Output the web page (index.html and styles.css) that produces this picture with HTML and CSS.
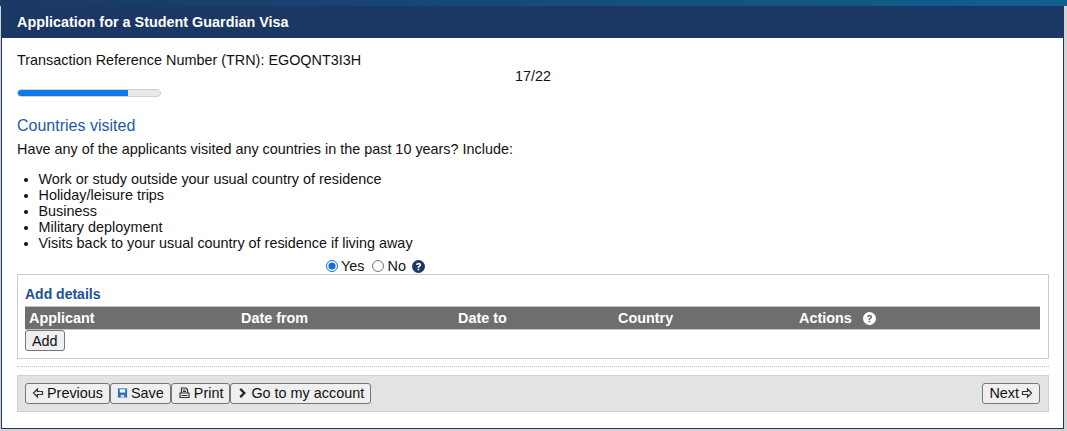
FILE: index.html
```html
<!DOCTYPE html>
<html lang="en">
<head>
    <meta charset="UTF-8">
    <title>Application for a Student Guardian Visa</title>
    <link rel="stylesheet" href="styles.css">
</head>
<body>
    <div class="top-strip"></div>
    <div class="page">
        <div class="page-title">Application for a Student Guardian Visa</div>
        <div class="content">
            <div class="trn">Transaction Reference Number (TRN): EGOQNT3I3H</div>
            <div class="step-count">17/22</div>
            <div class="progress"><div class="progress-bar"></div></div>

            <h2>Countries visited</h2>
            <p class="question">Have any of the applicants visited any countries in the past 10 years? Include:</p>
            <ul>
                <li>Work or study outside your usual country of residence</li>
                <li>Holiday/leisure trips</li>
                <li>Business</li>
                <li>Military deployment</li>
                <li>Visits back to your usual country of residence if living away</li>
            </ul>

            <div class="radio-row">
                <label><input type="radio" name="visited" checked>Yes</label>
                <label><input type="radio" name="visited">No</label>
                <svg class="help help-blue" viewBox="0 0 24 24"><circle cx="12" cy="12" r="12"/><path class="mark" d="M7.5 9.2c.3-2.6 2.2-4 4.7-4 2.600 0 4.500 1.500 4.500 3.800 0 1.800-1 2.700-2.200 3.500-1 .7-1.200 1-1.200 2.100h-3c0-2 .5-2.900 1.900-3.800 1-.7 1.400-1.100 1.400-1.700 0-.7-.6-1.200-1.400-1.200-.9 0-1.500.5-1.700 1.500zM10.300 16h3v3h-3z"/></svg>
            </div>

            <div class="details-box">
                <div class="details-title">Add details</div>
                <table>
                    <tr>
                        <th class="col-applicant">Applicant</th>
                        <th class="col-from">Date from</th>
                        <th class="col-to">Date to</th>
                        <th class="col-country">Country</th>
                        <th>Actions <svg class="help help-white" viewBox="0 0 24 24"><circle cx="12" cy="12" r="12"/><path class="mark" d="M7.5 9.2c.3-2.6 2.2-4 4.700-4 2.600 0 4.500 1.500 4.500 3.800 0 1.800-1 2.700-2.200 3.500-1 .7-1.200 1-1.200 2.100h-3c0-2 .5-2.900 1.900-3.800 1-.7 1.400-1.100 1.400-1.700 0-.7-.6-1.200-1.400-1.200-.9 0-1.500.5-1.700 1.500zM10.300 16h3v3h-3z"/></svg></th>
                    </tr>
                </table>
                <button class="btn">Add</button>
            </div>

            <div class="divider"></div>

            <div class="actions">
                <div class="actions-left">
                    <button class="btn">
                        <svg class="icon" viewBox="0 0 12 12"><path d="M1.500 6l4-4v2.500h5v3h-5V10z"/></svg>Previous
                    </button>
                    <button class="btn">
                        <svg class="icon icon-save" viewBox="0 0 12 12"><path class="save-body" d="M1 1h10v10H1z"/><path class="save-label" d="M3 2h6v3.500H3z"/><path class="save-slot" d="M4 8h4v3H4z"/></svg>Save
                    </button>
                    <button class="btn">
                        <svg class="icon icon-print" viewBox="0 0 12 12"><path d="M3 6V1h4.500L9 2.500V6M1.500 6h9v4.500h-9zM4.500 3h2.500M4.500 4.500h3M3 8.500h6"/></svg>Print
                    </button>
                    <button class="btn">
                        <svg class="icon icon-chevron" viewBox="0 0 12 12"><path d="M3.500 1.500L8 6l-4.500 4.500"/></svg>Go to my account
                    </button>
                </div>
                <button class="btn">Next<svg class="icon icon-after" viewBox="0 0 12 12"><path d="M10.500 6l-4-4v2.500h-5v3h5V10z"/></svg></button>
            </div>
        </div>
    </div>
</body>
</html>
```

FILE: styles.css
```css
* {
    box-sizing: border-box;
}

html, body {
    height: 100%;
}

body {
    margin: 0;
    background: #d3d3d3;
    font-family: "Liberation Sans", Arial, sans-serif;
    font-size: 14.4px;
    color: #111;
    overflow: hidden;
}

.top-strip {
    height: 6px;
    background: linear-gradient(to right, #1b3764, #10608f);
}

.page {
    width: 1063px;
    height: 423px;
    margin-left: 1px;
    background: white;
    border-left: 1px solid #1b3764;
    border-right: 1px solid #1b3764;
    border-bottom: 1px solid #1b3764;
}

.page-title {
    height: 32px;
    margin-right: -1px;
    padding: 8px 15px 0;
    background: #1b3764;
    color: white;
    font-weight: bold;
    line-height: 16px;
}

.content {
    padding: 14px 14px 0 15px;
}

.trn {
    line-height: 16px;
}

.step-count {
    text-align: center;
    line-height: 16px;
}

.progress {
    width: 144px;
    height: 8px;
    margin-top: 5px;
    background: #e9e9e9;
    border: 1px solid #d0d0d0;
    border-radius: 4px;
    overflow: hidden;
}

.progress-bar {
    width: 77.5%;
    height: 8px;
    margin-top: -1px;
    background: #0f78e6;
}

h2 {
    margin: 19px 0 0;
    font-size: 16px;
    font-weight: normal;
    line-height: 19px;
    color: #1c5aa5;
}

.question {
    margin: 6px 0 0;
    line-height: 16px;
}

ul {
    margin: 14px 0 0;
    padding-left: 21.500px;
}

li {
    line-height: 16px;
}

.radio-row {
    display: flex;
    align-items: center;
    height: 16px;
    margin-top: 7px;
    padding-left: 308px;
}

.radio-row label {
    display: flex;
    align-items: center;
    margin-right: 7px;
}

.radio-row input {
    width: 12px;
    height: 12px;
    margin: 0 3px 0 1px;
    accent-color: #0f6fdc;
}

.help {
    display: inline-block;
    width: 13px;
    height: 13px;
    vertical-align: -2px;
}

.help-blue {
    margin-left: -1px;
    fill: #1b3764;
}

.help-white {
    margin-left: 7px;
    fill: white;
}

.help-blue .mark {
    fill: white;
}

.help-white .mark {
    fill: #6e6e6e;
}

.details-box {
    height: 85px;
    padding: 11px 8px 0 7px;
    border: 1px solid #ccc;
}

.details-title {
    font-size: 14px;
    font-weight: bold;
    line-height: 16px;
    color: #1c4f96;
}

table {
    width: 100%;
    margin-top: 4px;
    border-collapse: collapse;
    table-layout: fixed;
}

th {
    height: 23px;
    padding: 0 4px;
    background: #6e6e6e;
    border: 1px solid #c4c4c4;
    border-width: 1px 0;
    color: white;
    font-size: 14.4px;
    text-align: left;
    font-weight: bold;
}

.col-applicant {
    width: 212px;
}

.col-from {
    width: 217px;
}

.col-to {
    width: 160px;
}

.col-country {
    width: 181px;
}

.btn {
    display: inline-flex;
    align-items: center;
    height: 21px;
    padding: 0 6px;
    background: #efefef;
    border: 1px solid #767676;
    border-radius: 3px;
    font-family: inherit;
    font-size: 14.4px;
    color: #111;
}

.divider {
    margin-top: 7px;
    border-top: 1px dotted #c4c4c4;
}

.actions {
    display: flex;
    justify-content: space-between;
    align-items: center;
    height: 37px;
    margin-top: 8px;
    padding: 0 8px 1px 7px;
    background: #e3e3e3;
    border: 1px solid #d0d0d0;
}

.actions-left {
    display: flex;
}

.icon {
    width: 12px;
    height: 12px;
    margin-right: 3px;
    fill: none;
    stroke: #333;
    stroke-width: 1.2;
}

.icon-after {
    margin-right: 0;
    margin-left: 2px;
}

.icon-chevron {
    width: 11px;
    stroke-width: 2.400;
    stroke: #222;
}

.icon-print {
    width: 13px;
}

.icon-save {
    width: 11px;
    stroke: none;
}

.save-body {
    fill: #2f6db5;
}

.save-label {
    fill: white;
}

.save-slot {
    fill: #cfd8e4;
}
```
